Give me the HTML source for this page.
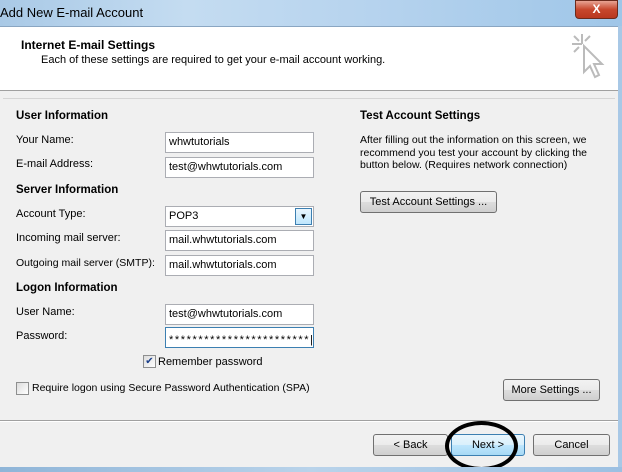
<!DOCTYPE html>
<html><head><style>
*{margin:0;padding:0;box-sizing:border-box}
body{width:622px;height:472px;overflow:hidden;font-family:"Liberation Sans",sans-serif;font-size:11px;color:#000;position:relative;background:#f0f0f0}
.a{position:absolute;white-space:nowrap}
.title{left:0;top:0;width:622px;height:26px;background:linear-gradient(90deg,#a9c9e6,#c4dcf1 30%,#b6d3ee 60%,#9fc6e8);}
.hdr{left:0;top:26px;width:618px;height:65px;background:#fff;border-bottom:1px solid #a0a0a0;border-top:1px solid #8aa6c2}
.in{position:absolute;left:165px;width:149px;height:21px;background:#fff;border:1px solid #abadb3;padding:3px 0 0 3px;font-size:11px}
.b{font-weight:bold;font-size:11.5px}
.btn{position:absolute;height:22px;border:1px solid #707070;border-radius:3px;background:linear-gradient(#f2f2f2,#ebebeb 50%,#dddddd 51%,#cfcfcf);text-align:center;line-height:20px;font-size:11px}
.cb{position:absolute;width:13px;height:13px;border:1px solid #8e8f8f;background:linear-gradient(135deg,#dcdcdc,#fff)}
</style></head><body>
<div class="a title"></div>
<div class="a" style="left:0;top:5px;font-size:13px;color:#000">Add New E-mail Account</div>
<div class="a" style="left:575px;top:0;width:43px;height:19px;border-radius:0 0 4px 4px;background:linear-gradient(#e8a393,#c7472d 50%,#b9381f);border:1px solid #6b2a1c;color:#fff;font-weight:bold;text-align:center;font-size:12px;line-height:17px">X</div>
<div class="a" style="left:618px;top:26px;width:4px;height:446px;background:#a8c8e6"></div>
<div class="a hdr"></div>
<div class="a b" style="left:21px;top:38px;font-size:12px">Internet E-mail Settings</div>
<div class="a" style="left:41px;top:54px">Each of these settings are required to get your e-mail account working.</div>
<svg class="a" style="left:568px;top:30px" width="40" height="52"><g stroke="#bbb" stroke-width="2" fill="none"><path d="M14 4v10M4 14h10M6 6l5 5M22 6l-5 5M6 22l5-5"/><path d="M16 16l0 26 6-6 5 11 4-2-5-11 8 0z" fill="#fff"/></g></svg>
<div class="a" style="left:3px;top:98px;width:612px;height:1px;background:#d5d5d5"></div>
<div class="a b" style="left:16px;top:110px">User Information</div>
<div class="a" style="left:16px;top:134px">Your Name:</div>
<div class="in" style="top:132px">whwtutorials</div>
<div class="a" style="left:16px;top:158px">E-mail Address:</div>
<div class="in" style="top:157px">test@whwtutorials.com</div>
<div class="a b" style="left:16px;top:184px">Server Information</div>
<div class="a" style="left:16px;top:208px">Account Type:</div>
<div class="in" style="top:206px">POP3</div>
<div class="a" style="left:295px;top:208px;width:17px;height:17px;border:1px solid #3c7fb1;background:linear-gradient(#eaf6fd,#bee6fd);text-align:center;font-size:8px;line-height:16px">▼</div>
<div class="a" style="left:16px;top:232px">Incoming mail server:</div>
<div class="in" style="top:230px">mail.whwtutorials.com</div>
<div class="a" style="left:16px;top:257px;font-size:10.5px">Outgoing mail server (SMTP):</div>
<div class="in" style="top:255px">mail.whwtutorials.com</div>
<div class="a b" style="left:16px;top:282px">Logon Information</div>
<div class="a" style="left:16px;top:306px">User Name:</div>
<div class="in" style="top:304px">test@whwtutorials.com</div>
<div class="a" style="left:16px;top:330px">Password:</div>
<div class="in" style="top:327px;border-color:#3c7fb1;font-size:11px;letter-spacing:1.6px;padding-top:6px;overflow:hidden;white-space:nowrap">************************|</div>
<div class="cb" style="left:143px;top:355px;font-size:10px;line-height:11px;text-align:center;color:#1a3f8a">✔</div>
<div class="a" style="left:158px;top:356px">Remember password</div>
<div class="cb" style="left:16px;top:382px"></div>
<div class="a" style="left:32px;top:382px;font-size:10.5px">Require logon using Secure Password Authentication (SPA)</div>
<div class="a b" style="left:360px;top:110px">Test Account Settings</div>
<div class="a" style="left:360px;top:134px;white-space:normal;width:245px;line-height:12.5px;font-size:10.5px">After filling out the information on this screen, we recommend you test your account by clicking the button below. (Requires network connection)</div>
<div class="btn" style="left:360px;top:191px;width:137px">Test Account Settings ...</div>
<div class="btn" style="left:503px;top:379px;width:97px">More Settings ...</div>
<div class="a" style="left:0;top:420px;width:618px;height:1px;background:#a0a0a0"></div>
<div class="a" style="left:0;top:421px;width:618px;height:1px;background:#fff"></div>
<div class="btn" style="left:373px;top:434px;width:75px">&lt; Back</div>
<div class="btn" style="left:451px;top:434px;width:74px;border-color:#3c7fb1;background:linear-gradient(#eaf6fd,#d9f0fc 50%,#bee6fd 51%,#a7d9f5)">Next &gt;</div>
<div class="btn" style="left:533px;top:434px;width:77px">Cancel</div>
<div class="a" style="left:445px;top:421px;width:73px;height:50px;border:4px solid #000;border-radius:50%"></div>
<div class="a" style="left:0;top:467px;width:622px;height:5px;background:linear-gradient(90deg,#8fb5d8,#b9d3ea,#9cc0e2)"></div>
</body></html>
